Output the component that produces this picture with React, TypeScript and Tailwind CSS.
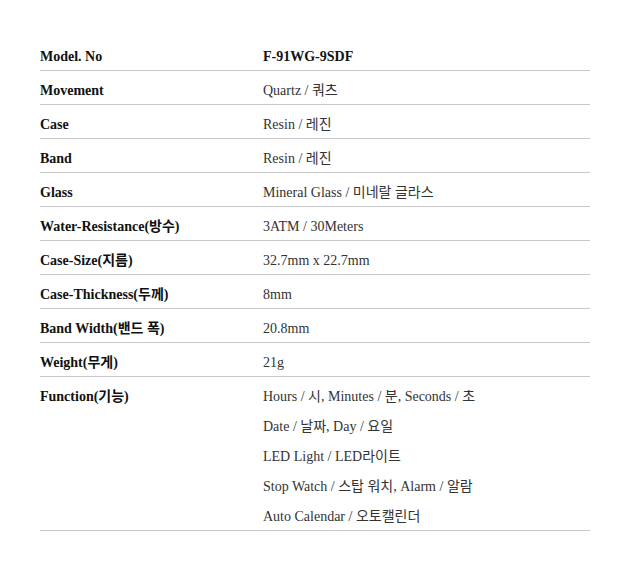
const specs: { label: string; value: string[]; bold?: boolean }[] = [
  { label: "Model. No", value: ["F-91WG-9SDF"], bold: true },
  { label: "Movement", value: ["Quartz / 쿼츠"] },
  { label: "Case", value: ["Resin / 레진"] },
  { label: "Band", value: ["Resin / 레진"] },
  { label: "Glass", value: ["Mineral Glass / 미네랄 글라스"] },
  { label: "Water-Resistance(방수)", value: ["3ATM / 30Meters"] },
  { label: "Case-Size(지름)", value: ["32.7mm x 22.7mm"] },
  { label: "Case-Thickness(두께)", value: ["8mm"] },
  { label: "Band Width(밴드 폭)", value: ["20.8mm"] },
  { label: "Weight(무게)", value: ["21g"] },
  {
    label: "Function(기능)",
    value: [
      "Hours / 시, Minutes / 분, Seconds / 초",
      "Date / 날짜, Day / 요일",
      "LED Light / LED라이트",
      "Stop Watch / 스탑 워치, Alarm / 알람",
      "Auto Calendar / 오토캘린더",
    ],
  },
];

export default function App() {
  return (
    <div className="w-[630px] h-[574px] bg-white pt-[37px] pl-[40px] font-['Liberation_Serif','Noto_Sans_CJK_KR',serif] text-[14px]">
      <div className="w-[550px]">
        {specs.map((row) => (
          <div key={row.label} className="flex pt-[3px] border-b border-[#c8c8c8]">
            <div className="w-[223px] shrink-0 h-[30px] font-bold text-[#111] leading-[30px] translate-y-0.5">
              {row.label}
            </div>
            <div className={`translate-y-0.5 ${row.bold ? "font-bold text-[#111]" : "text-[#333]"}`}>
              {row.value.map((line) => (
                <p key={line} className="h-[30px] leading-[30px]">
                  {line}
                </p>
              ))}
            </div>
          </div>
        ))}
      </div>
    </div>
  );
}
